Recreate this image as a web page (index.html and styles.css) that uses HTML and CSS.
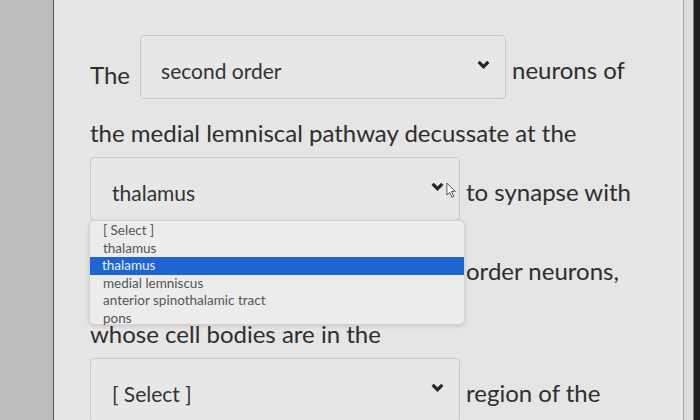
FILE: index.html
```html
<!DOCTYPE html>
<html lang="en">
<head>
    <meta charset="UTF-8">
    <title>Quiz question</title>
    <link rel="stylesheet" href="styles.css">
</head>
<body>
    <div class="frame">
        <div class="gutter"></div>

        <div class="question">
            <!-- sentence with inline dropdowns -->
            <div class="row">
                <span class="word first">The</span>
                <div class="select wide">
                    <span>second order</span>
                    <svg class="chevron" viewBox="0 0 12 8"><polyline points="1.5,1.5 6,6 10.5,1.5"/></svg>
                </div>
                <span class="word">neurons of</span>
            </div>

            <div class="line">the medial lemniscal pathway decussate at the</div>

            <div class="row">
                <div class="select open">
                    <span>thalamus</span>
                    <svg class="chevron" viewBox="0 0 12 8"><polyline points="1.5,1.5 6,6 10.5,1.5"/></svg>
                    <svg class="pointer" viewBox="0 0 12 18"><path d="M1 1 L1 14 L4 11 L6.5 16.5 L8.5 15.5 L6 10 L10 10 Z"/></svg>

                    <ul class="menu">
                        <li>[ Select ]</li>
                        <li>thalamus</li>
                        <li class="active">thalamus</li>
                        <li>medial lemniscus</li>
                        <li>anterior spinothalamic tract</li>
                        <li>pons</li>
                    </ul>
                </div>
                <span class="word">to synapse with</span>
            </div>

            <!-- this dropdown sits under the open menu -->
            <div class="row spaced">
                <div class="select covered">
                    <span>[ Select ]</span>
                    <svg class="chevron" viewBox="0 0 12 8"><polyline points="1.5,1.5 6,6 10.5,1.5"/></svg>
                </div>
                <span class="word">order neurons,</span>
            </div>

            <div class="line">whose cell bodies are in the</div>

            <div class="row">
                <div class="select">
                    <span>[ Select ]</span>
                    <svg class="chevron" viewBox="0 0 12 8"><polyline points="1.5,1.5 6,6 10.5,1.5"/></svg>
                </div>
                <span class="word">region of the</span>
            </div>
        </div>

        <div class="edge"></div>
    </div>
</body>
</html>
```

FILE: styles.css
```css
body {
    margin: 0;
    padding: 0;
    font-family: Lato, "Open Sans", sans-serif;
    color: #2e2e2e;
    background-color: #e3e4e3;
    overflow: hidden;
}
.frame {
    display: flex;
    height: 420px;
}
.gutter {
    width: 53px;
    background-color: #bdbcbf;
    border-right: 1px solid #555;
}
.question {
    flex: 1;
    padding-top: 35px;
    padding-left: 36px;
    background-color: #e4e5e4;
}
.edge {
    width: 16px;
    border-left: 1px solid #a3a3a3;
    background: linear-gradient(to right, #dcdcdc 0, #dcdcdc 9px, #1e1e1e 10px);
}
.row {
    display: flex;
    align-items: baseline;
}
.row.spaced {
    margin-top: 15px;
}
.line {
    padding-top: 10px;
    font-size: 24px;
    line-height: 48px;
}
.word {
    font-size: 24px;
    line-height: 30px;
}
.word.first {
    align-self: flex-end;
    margin-right: 10px;
    margin-bottom: 9px;
}
.select {
    position: relative;
    display: flex;
    justify-content: space-between;
    align-items: baseline;
    box-sizing: border-box;
    width: 370px;
    height: 64px;
    margin-right: 6px;
    padding: 22px 15px 0 21px;
    border: 1px solid #c9c9c9;
    border-radius: 4px;
    background-color: #e6e7e6;
    font-size: 21px;
    line-height: 26px;
    color: #333;
}
.select.wide {
    width: 366px;
    padding-left: 20px;
}
.select.covered span {
    visibility: hidden;
}
.chevron {
    align-self: flex-start;
    width: 13px;
    height: 9px;
    margin-top: 2px;
    fill: none;
    stroke: #262626;
    stroke-width: 2.9;
}
.pointer {
    position: absolute;
    right: 2px;
    top: 24px;
    width: 11px;
    height: 17px;
    fill: #fff;
    stroke: #444;
    stroke-width: 1;
}
.menu {
    position: absolute;
    top: 100%;
    left: -2px;
    width: 374px;
    height: 102px;
    margin: 0;
    padding: 1px 0 0;
    list-style-type: none;
    background-color: #ececec;
    border: 1px solid #d4d4d4;
    border-radius: 6px;
    box-shadow: 0 1px 4px rgba(0,0,0,0.15);
    font-size: 13.5px;
    line-height: 17.5px;
    color: #555;
    z-index: 2;
}
.menu li {
    padding-left: 13px;
}
.menu li.active {
    background-color: #1f64d0;
    color: #e8eefa;
    padding-left: 12px;
}
```
